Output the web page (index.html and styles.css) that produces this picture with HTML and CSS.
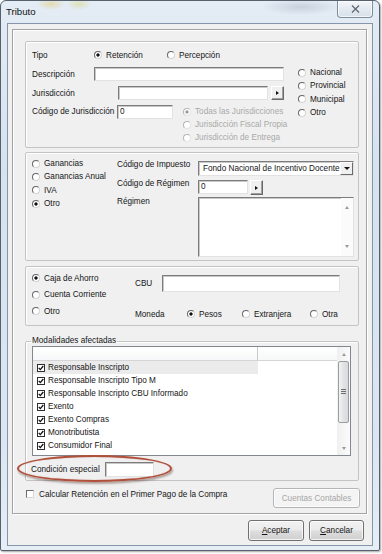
FILE: index.html
```html
<!DOCTYPE html>
<html lang="es">
<head>
<meta charset="utf-8">
<title>Tributo</title>
<link rel="stylesheet" href="styles.css">
</head>
<body>
<div class="window">
  <div class="titlebar">
    <span class="title">Tributo</span>
    <div class="close"><svg width="9" height="8" viewBox="0 0 9 8"><path d="M1 0.5 L8 7.5 M8 0.5 L1 7.5" stroke="#5d6874" stroke-width="1.2" fill="none"/></svg></div>
  </div>
  <div class="client">
    <div class="panel">
      <div class="group g1">
        <div class="row tipo-row">
          <span class="lbl w62">Tipo</span>
          <span class="opt w73"><i class="radio on"></i>Retención</span>
          <span class="opt"><i class="radio"></i>Percepción</span>
        </div>
        <div class="g1-body">
          <div class="g1-left">
            <div class="row r-desc"><span class="lbl w62">Descripción</span><span class="field w190"></span></div>
            <div class="row r-jur"><span class="lbl w86">Jurisdicción</span><span class="field w150"></span><span class="btn-sm"><i class="tri-r"></i></span></div>
            <div class="row r-cod"><span class="lbl w85">Código de Jurisdicción</span><span class="field w56">0</span>
              <div class="optlist disabled">
                <span class="opt"><i class="radio on"></i>Todas las Jurisdicciones</span>
                <span class="opt"><i class="radio"></i>Jurisdicción Fiscal Propia</span>
                <span class="opt"><i class="radio"></i>Jurisdicción de Entrega</span>
              </div>
            </div>
          </div>
          <div class="g1-right">
            <span class="opt"><i class="radio"></i>Nacional</span>
            <span class="opt"><i class="radio"></i>Provincial</span>
            <span class="opt"><i class="radio"></i>Municipal</span>
            <span class="opt"><i class="radio"></i>Otro</span>
          </div>
        </div>
      </div>

      <div class="group g2">
        <div class="g2-radios">
          <span class="opt"><i class="radio"></i>Ganancias</span>
          <span class="opt"><i class="radio"></i>Ganancias Anual</span>
          <span class="opt"><i class="radio"></i>IVA</span>
          <span class="opt"><i class="radio on"></i>Otro</span>
        </div>
        <div class="g2-labels">
          <span class="l1">Código de Impuesto</span>
          <span class="l2">Código de Régimen</span>
          <span class="l3">Régimen</span>
        </div>
        <div class="g2-ctrls">
          <div class="select"><span class="select-text">Fondo Nacional de Incentivo Docente</span><span class="select-btn"><i class="tri-d"></i></span></div>
          <div class="row r-reg"><span class="field w50">0</span><span class="btn-sm tall"><i class="tri-r"></i></span></div>
          <div class="textarea"><span class="ta-body"></span><span class="ta-scroll"><i class="arr-up"></i><i class="arr-down"></i></span></div>
        </div>
      </div>

      <div class="group g3">
        <div class="g3-radios">
          <span class="opt"><i class="radio on"></i>Caja de Ahorro</span>
          <span class="opt"><i class="radio"></i>Cuenta Corriente</span>
          <span class="opt"><i class="radio"></i>Otro</span>
        </div>
        <div class="g3-right">
          <div class="row cbu-row"><span class="lbl w27">CBU</span><span class="field w178 h17"></span></div>
          <div class="row moneda-row">
            <span class="lbl w52">Moneda</span>
            <span class="opt w55"><i class="radio on"></i>Pesos</span>
            <span class="opt w68"><i class="radio"></i>Extranjera</span>
            <span class="opt"><i class="radio"></i>Otra</span>
          </div>
        </div>
      </div>

      <fieldset class="g4">
        <legend>Modalidades afectadas</legend>
        <div class="listbox">
          <div class="list-main">
            <div class="list-head"><span class="hcol1"></span><span class="hcol2"></span></div>
            <div class="items">
              <div class="item hl"><svg class="chk" viewBox="0 0 8 8"><rect x="0.5" y="0.5" width="7" height="7" fill="#fff" stroke="#2e2e2e"/><path d="M1.7 3.9 L3.3 5.6 L6.3 2" fill="none" stroke="#111" stroke-width="1.3"/></svg>Responsable Inscripto</div>
              <div class="item"><svg class="chk" viewBox="0 0 8 8"><rect x="0.5" y="0.5" width="7" height="7" fill="#fff" stroke="#2e2e2e"/><path d="M1.7 3.9 L3.3 5.6 L6.3 2" fill="none" stroke="#111" stroke-width="1.3"/></svg>Responsable Inscripto Tipo M</div>
              <div class="item"><svg class="chk" viewBox="0 0 8 8"><rect x="0.5" y="0.5" width="7" height="7" fill="#fff" stroke="#2e2e2e"/><path d="M1.7 3.9 L3.3 5.6 L6.3 2" fill="none" stroke="#111" stroke-width="1.3"/></svg>Responsable Inscripto CBU Informado</div>
              <div class="item"><svg class="chk" viewBox="0 0 8 8"><rect x="0.5" y="0.5" width="7" height="7" fill="#fff" stroke="#2e2e2e"/><path d="M1.7 3.9 L3.3 5.6 L6.3 2" fill="none" stroke="#111" stroke-width="1.3"/></svg>Exento</div>
              <div class="item"><svg class="chk" viewBox="0 0 8 8"><rect x="0.5" y="0.5" width="7" height="7" fill="#fff" stroke="#2e2e2e"/><path d="M1.7 3.9 L3.3 5.6 L6.3 2" fill="none" stroke="#111" stroke-width="1.3"/></svg>Exento Compras</div>
              <div class="item"><svg class="chk" viewBox="0 0 8 8"><rect x="0.5" y="0.5" width="7" height="7" fill="#fff" stroke="#2e2e2e"/><path d="M1.7 3.9 L3.3 5.6 L6.3 2" fill="none" stroke="#111" stroke-width="1.3"/></svg>Monotributista</div>
              <div class="item"><svg class="chk" viewBox="0 0 8 8"><rect x="0.5" y="0.5" width="7" height="7" fill="#fff" stroke="#2e2e2e"/><path d="M1.7 3.9 L3.3 5.6 L6.3 2" fill="none" stroke="#111" stroke-width="1.3"/></svg>Consumidor Final</div>
            </div>
          </div>
          <div class="vscroll">
            <span class="sb-arrow"><i class="arr-up"></i></span>
            <span class="thumb"><i class="grip"></i></span>
            <span class="sb-track"></span>
            <span class="sb-arrow"><i class="arr-down"></i></span>
          </div>
        </div>
        <div class="row cond-row">
          <span class="lbl w74">Condición especial</span><span class="field w49 h15"></span>
          <span class="oval"></span>
        </div>
      </fieldset>

      <div class="bottom-row">
        <span class="check-opt"><i class="chk-empty"></i>Calcular Retención en el Primer Pago de la Compra</span>
        <span class="button disabled-btn">Cuentas Contables</span>
      </div>
    </div>
    <div class="dlg-buttons">
      <span class="button b-ok"><u>A</u>ceptar</span>
      <span class="button b-cancel"><u>C</u>ancelar</span>
    </div>
  </div>
</div>
</body>
</html>
```

FILE: styles.css
```css
* { box-sizing: border-box; }
html, body { margin: 0; padding: 0; }
body {
  width: 382px; height: 554px; overflow: hidden;
  background: #ffffff;
  font-family: "Liberation Sans", Arial, sans-serif;
  font-size: 8.2px;
  color: #151515;
}
i { font-style: normal; display: inline-block; flex: none; }

.window {
  width: 380px; height: 551px;
  border: 1px solid #56616d;
  border-radius: 6px 6px 2px 2px;
  background:
    radial-gradient(ellipse 14px 6px at 50px 3px, rgba(226,204,120,0.55), rgba(226,204,120,0) 100%),
    radial-gradient(ellipse 12px 6px at 78px 3px, rgba(214,214,120,0.5), rgba(214,214,120,0) 100%),
    radial-gradient(ellipse 40px 8px at 300px 6px, rgba(150,160,175,0.35), rgba(150,160,175,0) 100%),
    linear-gradient(#e4ecf5, #d6e2ef 30%, #dbe6f2 80%, #e6eef6);
  box-shadow: 1px 1px 2px rgba(0,0,0,0.35);
  display: flex; flex-direction: column;
}
.titlebar {
  height: 22px; flex: none;
  display: flex; justify-content: space-between; align-items: flex-start;
  padding: 0 6px 0 5px;
}
.title { font-size: 9.6px; line-height: 22px; color: #111; }
.close {
  width: 36px; height: 17px;
  border: 1px solid #7f8c9b; border-top: none;
  border-radius: 0 0 4px 4px;
  background: linear-gradient(#f3f6fa, #e3e9f0 55%, #d8e0ea);
  box-shadow: inset 0 0 0 1px rgba(255,255,255,0.7);
  display: flex; align-items: center; justify-content: center;
}

.client {
  margin: 0 6px; height: 523px; flex: none;
  border: 1px solid #8596aa;
  background: #f0f0f0;
  display: flex; flex-direction: column;
}
.panel {
  margin: 5px 0 0 4px;
  width: 355px; height: 485px; flex: none;
  border: 1px solid #a3a3a3;
  box-shadow: inset 1px 1px 0 #ffffff, 1px 1px 0 #ffffff;
  padding: 11px 0 0 12px;
}

.group {
  width: 334px;
  border: 1px solid #c4c4c4;
  border-radius: 2px;
  box-shadow: inset 1px 1px 0 #ffffff;
}
.row { display: flex; align-items: center; }
.lbl { flex: none; white-space: nowrap; }
.w27 { width: 27px; } .w52 { width: 52px; } .w55 { width: 55px; } .w62 { width: 62px; }
.w68 { width: 68px; } .w73 { width: 73px; } .w74 { width: 74px; } .w85 { width: 85px; } .w86 { width: 86px; }

.opt { display: flex; align-items: center; white-space: nowrap; flex: none; height: 13px; }
.radio {
  width: 8px; height: 8px; border-radius: 50%;
  border: 1px solid; border-color: #666 #d4d4d4 #d4d4d4 #666;
  background: #fff; margin-right: 4px;
}
.radio.on { background: radial-gradient(circle, #111 1.1px, #555 1.5px, #fff 1.9px); }
.disabled { color: #a9a9a9; }
.disabled .radio { border-color: #b6b6b6 #e4e4e4 #e4e4e4 #b6b6b6; }
.disabled .radio.on { background: radial-gradient(circle, #9a9a9a 1.1px, #bbb 1.5px, #fff 1.9px); }

.field {
  display: block; flex: none; height: 14px;
  background: #fff;
  border: 1px solid; border-color: #7c7c7c #e2e2e2 #e2e2e2 #7c7c7c;
  box-shadow: inset 1px 1px 0 #c8c8c8;
  padding: 0 2px; line-height: 12px;
}
.w49 { width: 49px; } .w50 { width: 50px; } .w56 { width: 56px; } .w150 { width: 150px; }
.w178 { width: 178px; } .w190 { width: 190px; }
.h15 { height: 15px; } .h17 { height: 17px; }

.btn-sm {
  width: 13px; height: 14px; flex: none; margin-left: 3px;
  background: #f0f0f0;
  border: 1px solid; border-color: #ffffff #6a6a6a #6a6a6a #ffffff;
  box-shadow: inset -1px -1px 0 #a0a0a0;
  display: flex; align-items: center; justify-content: center;
}
.btn-sm.tall { height: 15px; margin-left: 2px; }
.tri-r { width: 0; height: 0; border-top: 2.5px solid transparent; border-bottom: 2.5px solid transparent; border-left: 3px solid #111; }
.tri-d { width: 0; height: 0; border-left: 3px solid transparent; border-right: 3px solid transparent; border-top: 3px solid #111; }

/* group 1 */
.g1 { height: 107px; padding: 6px 0 0 6px; }
.tipo-row { height: 14px; }
.g1-body { display: flex; }
.g1-left { width: 266px; flex: none; }
.r-desc, .r-jur, .r-cod { margin-top: 5px; height: 14px; }
.r-cod { align-items: flex-start; }
.r-cod .lbl { line-height: 14px; }
.optlist { margin-left: 10px; display: flex; flex-direction: column; }
.g1-right { padding-top: 4px; display: flex; flex-direction: column; }
.g1-right .opt { height: 13.3px; }

/* group 2 */
.g2 { margin-top: 4px; height: 109px; display: flex; padding-left: 6px; }
.g2-radios { width: 85px; flex: none; padding-top: 4px; display: flex; flex-direction: column; }
.g2-radios .opt { height: 13.3px; }
.g2-labels { width: 81px; flex: none; padding-top: 5px; display: flex; flex-direction: column; }
.g2-labels span { height: 13px; line-height: 13px; white-space: nowrap; }
.g2-labels .l2 { margin-top: 6px; }
.g2-labels .l3 { margin-top: 5px; }
.g2-ctrls { width: 156px; flex: none; padding-top: 8px; }
.select {
  height: 15px; width: 156px; display: flex;
  background: #fff;
  border: 1px solid; border-color: #7c7c7c #e2e2e2 #e2e2e2 #7c7c7c;
  box-shadow: inset 1px 1px 0 #c8c8c8;
}
.select-text { flex: 1; overflow: hidden; white-space: nowrap; padding-left: 4px; line-height: 13px; }
.select-btn {
  width: 13px; flex: none; height: 13px;
  background: #f0f0f0;
  border: 1px solid; border-color: #ffffff #6a6a6a #6a6a6a #ffffff;
  display: flex; align-items: center; justify-content: center;
}
.r-reg { margin-top: 4px; height: 15px; align-items: flex-start; }
.textarea {
  margin-top: 2px; width: 156px; height: 60px; display: flex;
  background: #fff;
  border: 1px solid; border-color: #7c7c7c #e2e2e2 #e2e2e2 #7c7c7c;
  box-shadow: inset 1px 1px 0 #c8c8c8;
}
.ta-body { flex: 1; }
.ta-scroll {
  width: 12px; flex: none; display: flex; flex-direction: column; justify-content: space-between; align-items: center;
  padding: 8px 0 8px; background: #fbfbfb;
}
.arr-up { width: 0; height: 0; border-left: 2.5px solid transparent; border-right: 2.5px solid transparent; border-bottom: 3px solid #9a9a9a; }
.arr-down { width: 0; height: 0; border-left: 2.5px solid transparent; border-right: 2.5px solid transparent; border-top: 3px solid #9a9a9a; }

/* group 3 */
.g3 { margin-top: 5px; height: 60px; display: flex; padding-left: 6px; }
.g3-radios { width: 103px; flex: none; padding-top: 3px; display: flex; flex-direction: column; }
.g3-radios .opt { height: 16.5px; }
.g3-right { padding-top: 8px; }
.cbu-row { height: 17px; }
.moneda-row { margin-top: 15px; height: 14px; }

/* group 4 */
.g4 {
  margin: 10px 0 0 0; width: 334px;
  border: 1px solid #c4c4c4; border-radius: 2px;
  box-shadow: inset 1px 1px 0 #ffffff;
  padding: 0 6px 3px 6px; min-inline-size: 0;
}
.g4 legend { padding: 0 1px; margin-left: -1px; line-height: 10px; font-size: 8.2px; }
.listbox {
  width: 319px; height: 110px; display: flex;
  border: 1px solid #828790;
  background: #fff;
}
.list-main { width: 304px; flex: none; display: flex; flex-direction: column; }
.list-head { height: 14px; flex: none; display: flex; border-bottom: 1px solid #d5d5d5; background: linear-gradient(#ffffff, #f7f8f9); }
.hcol1 { width: 225px; border-right: 1px solid #c9c9c9; }
.items { flex: 1; overflow: hidden; }
.item { height: 13px; display: flex; align-items: center; padding-left: 4px; white-space: nowrap; }
.item.hl { width: 225px; background: #ebebeb; }
.chk { width: 8px; height: 8px; flex: none; margin-right: 3px; }
.vscroll {
  width: 13px; flex: none; display: flex; flex-direction: column;
  background: linear-gradient(90deg, #f0f0f0, #fbfbfb);
}
.sb-arrow { height: 14px; flex: none; display: flex; align-items: center; justify-content: center; }
.thumb {
  height: 62px; flex: none; margin: 0 1px 0 1px;
  border: 1px solid #9c9c9c; border-radius: 2px;
  background: linear-gradient(90deg, #f3f3f3, #e2e3e6 50%, #d7d9dd);
  display: flex; align-items: center; justify-content: center;
}
.grip { width: 5px; height: 6px; background: repeating-linear-gradient(#6e6e6e 0 1px, transparent 1px 2px); }
.sb-track { flex: 1; }
.cond-row { margin-top: 6px; height: 15px; position: relative; }
.cond-row .lbl { margin-left: -1px; }
.oval {
  position: absolute; left: -15px; top: -7px; width: 155px; height: 27px;
  border: 2px solid #b0503a; border-radius: 50%;
  box-shadow: 1px 2px 2px rgba(60,20,10,0.35), inset 0 0 1px rgba(120,40,20,0.4);
}

/* bottom */
.bottom-row {
  margin-top: 7px; width: 335px; height: 20px;
  display: flex; justify-content: space-between; align-items: flex-start;
  padding-left: 1px;
}
.check-opt { display: flex; align-items: center; height: 12px; white-space: nowrap; }
.chk-empty {
  width: 8px; height: 8px; margin-right: 5px;
  background: #fff;
  border: 1px solid; border-color: #6b6b6b #d8d8d8 #d8d8d8 #6b6b6b;
}
.button {
  display: flex; align-items: center; justify-content: center; flex: none;
  border: 1px solid #707070; border-radius: 3px;
  background: linear-gradient(#f2f2f2, #ebebeb 45%, #dddddd 55%, #cfcfcf);
  box-shadow: inset 0 0 0 1px rgba(255,255,255,0.75);
  white-space: nowrap;
}
.disabled-btn {
  width: 87px; height: 20px; color: #a6a6a6;
  border-color: #b3b6b8;
  background: #f4f4f4;
}
.dlg-buttons {
  margin-top: 6px; height: 21px;
  display: flex; justify-content: flex-end; gap: 5px;
  padding-right: 8px;
}
.b-ok { width: 56px; height: 21px; }
.b-cancel { width: 55px; height: 21px; }
.button u { text-decoration: underline; text-underline-offset: 1px; }
```
